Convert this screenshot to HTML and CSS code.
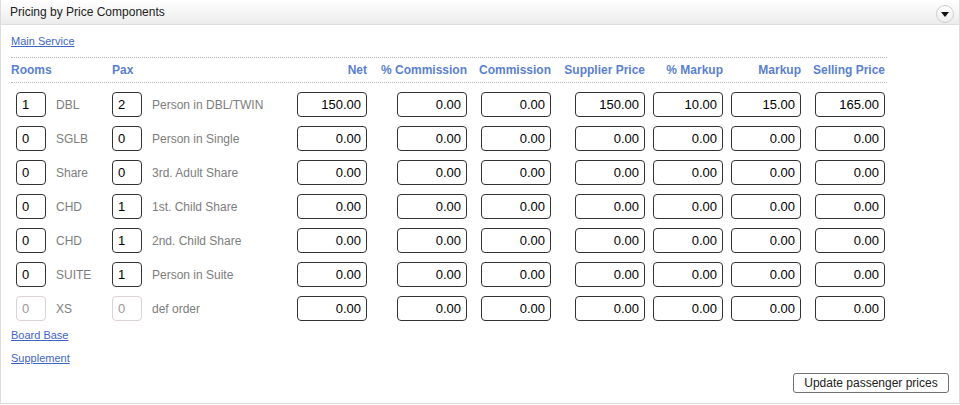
FILE: index.html
```html
<!DOCTYPE html>
<html>
<head>
<meta charset="utf-8">
<link rel="stylesheet" href="styles.css">
</head>
<body>
<div class="panel">
  <div class="panel-head">
    <span class="panel-title">Pricing by Price Components</span>
    <span class="toggle"><svg width="8" height="5" viewBox="0 0 8 5"><path d="M0 0H8L4 5Z" fill="#111"/></svg></span>
  </div>
  <div class="panel-body">
    <a class="sec-link" href="#">Main Service</a>
    <div class="grid">
      <div class="hcell left">Rooms</div>
      <div class="hcell left">Pax</div>
      <div class="hcell">Net</div>
      <div class="hcell">% Commission</div>
      <div class="hcell">Commission</div>
      <div class="hcell">Supplier Price</div>
      <div class="hcell">% Markup</div>
      <div class="hcell">Markup</div>
      <div class="hcell">Selling Price</div>
    </div>
    <div class="rows">
      <div class="row">
        <div class="cell-lab"><input class="qty" value="1"><span class="lab">DBL</span></div>
        <div class="cell-lab"><input class="qty pax" value="2"><span class="lab">Person in DBL/TWIN</span></div>
        <input class="num" value="150.00"><input class="num" value="0.00"><input class="num" value="0.00"><input class="num" value="150.00"><input class="num" value="10.00"><input class="num" value="15.00"><input class="num" value="165.00">
      </div>
      <div class="row">
        <div class="cell-lab"><input class="qty" value="0"><span class="lab">SGLB</span></div>
        <div class="cell-lab"><input class="qty pax" value="0"><span class="lab">Person in Single</span></div>
        <input class="num" value="0.00"><input class="num" value="0.00"><input class="num" value="0.00"><input class="num" value="0.00"><input class="num" value="0.00"><input class="num" value="0.00"><input class="num" value="0.00">
      </div>
      <div class="row">
        <div class="cell-lab"><input class="qty" value="0"><span class="lab">Share</span></div>
        <div class="cell-lab"><input class="qty pax" value="0"><span class="lab">3rd. Adult Share</span></div>
        <input class="num" value="0.00"><input class="num" value="0.00"><input class="num" value="0.00"><input class="num" value="0.00"><input class="num" value="0.00"><input class="num" value="0.00"><input class="num" value="0.00">
      </div>
      <div class="row">
        <div class="cell-lab"><input class="qty" value="0"><span class="lab">CHD</span></div>
        <div class="cell-lab"><input class="qty pax" value="1"><span class="lab">1st. Child Share</span></div>
        <input class="num" value="0.00"><input class="num" value="0.00"><input class="num" value="0.00"><input class="num" value="0.00"><input class="num" value="0.00"><input class="num" value="0.00"><input class="num" value="0.00">
      </div>
      <div class="row">
        <div class="cell-lab"><input class="qty" value="0"><span class="lab">CHD</span></div>
        <div class="cell-lab"><input class="qty pax" value="1"><span class="lab">2nd. Child Share</span></div>
        <input class="num" value="0.00"><input class="num" value="0.00"><input class="num" value="0.00"><input class="num" value="0.00"><input class="num" value="0.00"><input class="num" value="0.00"><input class="num" value="0.00">
      </div>
      <div class="row">
        <div class="cell-lab"><input class="qty" value="0"><span class="lab">SUITE</span></div>
        <div class="cell-lab"><input class="qty pax" value="1"><span class="lab">Person in Suite</span></div>
        <input class="num" value="0.00"><input class="num" value="0.00"><input class="num" value="0.00"><input class="num" value="0.00"><input class="num" value="0.00"><input class="num" value="0.00"><input class="num" value="0.00">
      </div>
      <div class="row">
        <div class="cell-lab"><input class="qty off" value="0" disabled><span class="lab">XS</span></div>
        <div class="cell-lab"><input class="qty pax off" value="0" disabled><span class="lab">def order</span></div>
        <input class="num" value="0.00"><input class="num" value="0.00"><input class="num" value="0.00"><input class="num" value="0.00"><input class="num" value="0.00"><input class="num" value="0.00"><input class="num" value="0.00">
      </div>
    </div>
    <a class="sec-link board" href="#">Board Base</a>
    <a class="sec-link supp" href="#">Supplement</a>
    <div class="actions"><button class="btn">Update passenger prices</button></div>
  </div>
</div>
</body>
</html>
```
FILE: styles.css
```css
* { box-sizing: border-box; }
html, body { margin: 0; padding: 0; background: #fff; }
body { font-family: "Liberation Sans", Arial, sans-serif; width: 960px; height: 405px; overflow: hidden; }

.panel {
  width: 960px;
  height: 404px;
  border: 1px solid #dcdcdc;
  border-top: none;
  display: flex;
  flex-direction: column;
}
.panel-head {
  height: 25px;
  background: linear-gradient(#ffffff, #ececec);
  border-bottom: 1px solid #dedede;
  display: flex;
  align-items: center;
  justify-content: space-between;
  padding: 0 5px 0 9px;
}
.panel-title { font-size: 12px; color: #222; padding-bottom: 1px; }
.toggle {
  width: 18px; height: 18px;
  border: 1px solid #cfcfcf;
  border-radius: 50%;
  background: linear-gradient(#ffffff, #eeeeee);
  display: flex; align-items: center; justify-content: center;
  margin-top: 3px;
  padding-top: 1px;
}
.panel-body { padding: 9px 0 0 10px; display: flex; flex-direction: column; }

.sec-link {
  display: block;
  align-self: flex-start;
  font-size: 11px;
  line-height: 14px;
  color: #3f66c9;
  text-decoration: underline;
}
.grid {
  margin-top: 9px;
  width: 876px;
  display: grid;
  grid-template-columns: 101px 178px 77px 100px 84px 94px 78px 78px 84px;
  border-top: 1px dotted #b8b8b8;
  border-bottom: 1px dotted #b8b8b8;
  height: 26px;
  align-items: center;
}
.hcell {
  font-size: 12px;
  font-weight: bold;
  color: #5b7fcf;
  text-align: right;
  white-space: nowrap;
}
.hcell.left { text-align: left; }

.rows {
  width: 876px;
  padding-top: 9px;
  display: flex;
  flex-direction: column;
  gap: 9px;
}
.row {
  display: grid;
  grid-template-columns: 101px 178px 77px 100px 84px 94px 78px 78px 84px;
  height: 25px;
  align-items: center;
}
.cell-lab { display: flex; align-items: center; }
.qty {
  width: 30px; height: 25px;
  margin-left: 5px;
  border: 1px solid #333;
  border-radius: 4px;
  font-family: "Liberation Sans", Arial, sans-serif;
  font-size: 13px;
  color: #000;
  padding: 0 0 0 5px;
  background: #fff;
}
.qty.pax { margin-left: 0; }
.qty.off { border-color: #dcd2d2; color: #999; }
.lab { margin-left: 10px; font-size: 12px; color: #7d7d7d; white-space: nowrap; }
.num {
  justify-self: end;
  width: 70px; height: 25px;
  border: 1px solid #333;
  border-radius: 4px;
  font-family: "Liberation Sans", Arial, sans-serif;
  font-size: 13px;
  color: #000;
  text-align: right;
  padding: 0 5px 0 0;
  background: #fff;
}
.board { margin-top: 7px; }
.supp { margin-top: 9px; }
.actions { display: flex; justify-content: flex-end; padding-right: 10px; margin-top: 8px; }
.btn {
  height: 20px;
  width: 156px;
  font-family: "Liberation Sans", Arial, sans-serif;
  font-size: 12px;
  color: #222;
  background: #fff;
  border: 1px solid #707070;
  border-radius: 3px;
  padding: 0;
}
```
